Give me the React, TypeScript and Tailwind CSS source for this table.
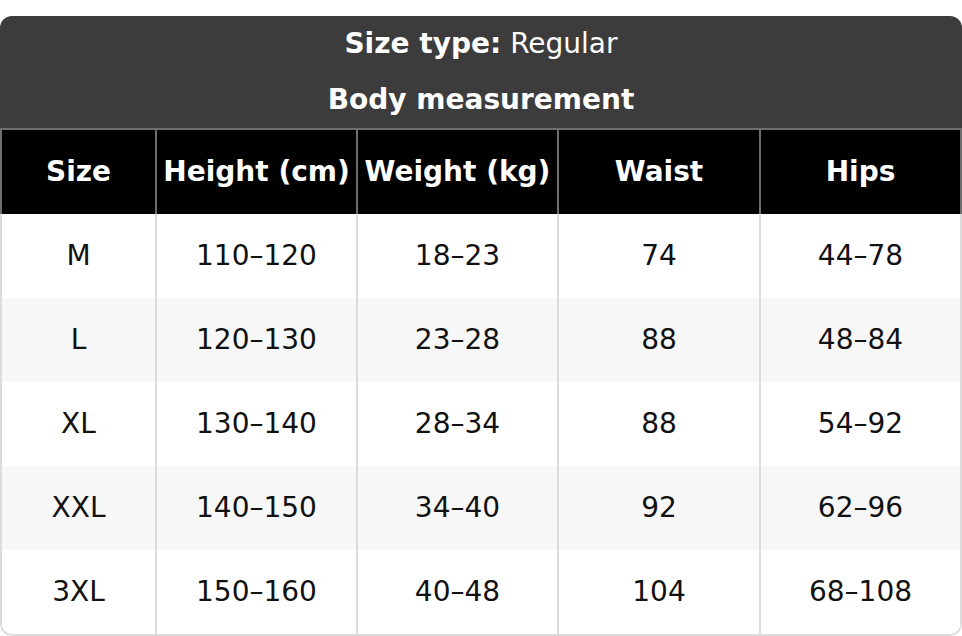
import React from "react";

const rows = [
  ["M", "110–120", "18–23", "74", "44–78"],
  ["L", "120–130", "23–28", "88", "48–84"],
  ["XL", "130–140", "28–34", "88", "54–92"],
  ["XXL", "140–150", "34–40", "92", "62–96"],
  ["3XL", "150–160", "40–48", "104", "68–108"],
];

const heads = ["Size", "Height (cm)", "Weight (kg)", "Waist", "Hips"];

const cols = "grid grid-cols-[155px_201px_201px_202px_199px]";

export default function App() {
  return (
    <div
      className="w-[962px] h-[636px] bg-white pt-[16px]"
      style={{ fontFamily: '"DejaVu Sans", Verdana, sans-serif' }}
    >
      <div className="w-[962px] rounded-[12px] overflow-hidden">
        <div className="bg-[#3c3c3c] text-white text-[28px] text-center">
          <div className="h-[55px] flex items-center justify-center pt-[1px]">
            <span className="font-bold">Size type:</span>
            <span className="ml-[9px]">Regular</span>
          </div>
          <div className="h-[57px] flex items-center justify-center font-bold">
            Body measurement
          </div>
        </div>
        <div className={`${cols} bg-black border-t-2 border-l-2 border-r-2 border-[#6e6e6e] text-white font-bold text-[28px]`}>
          {heads.map((h, i) => (
            <div
              key={h}
              className={`h-[84px] flex items-center justify-center whitespace-nowrap ${
                i < 4 ? "border-r-2 border-[#6e6e6e]" : ""
              }`}
            >
              {h}
            </div>
          ))}
        </div>
        <div className="border-l-2 border-r-2 border-b-2 border-[#dcdcdc] rounded-b-[12px] overflow-hidden">
          {rows.map((r, ri) => (
            <div
              key={ri}
              className={`${cols} ${ri % 2 === 1 ? "bg-[#f7f7f7]" : "bg-white"} text-[28px] text-[#111]`}
            >
              {r.map((c, ci) => (
                <div
                  key={ci}
                  className={`h-[84px] flex items-center justify-center ${
                    ci < 4 ? "border-r-2 border-[#dcdcdc]" : ""
                  }`}
                >
                  {c}
                </div>
              ))}
            </div>
          ))}
        </div>
      </div>
    </div>
  );
}
